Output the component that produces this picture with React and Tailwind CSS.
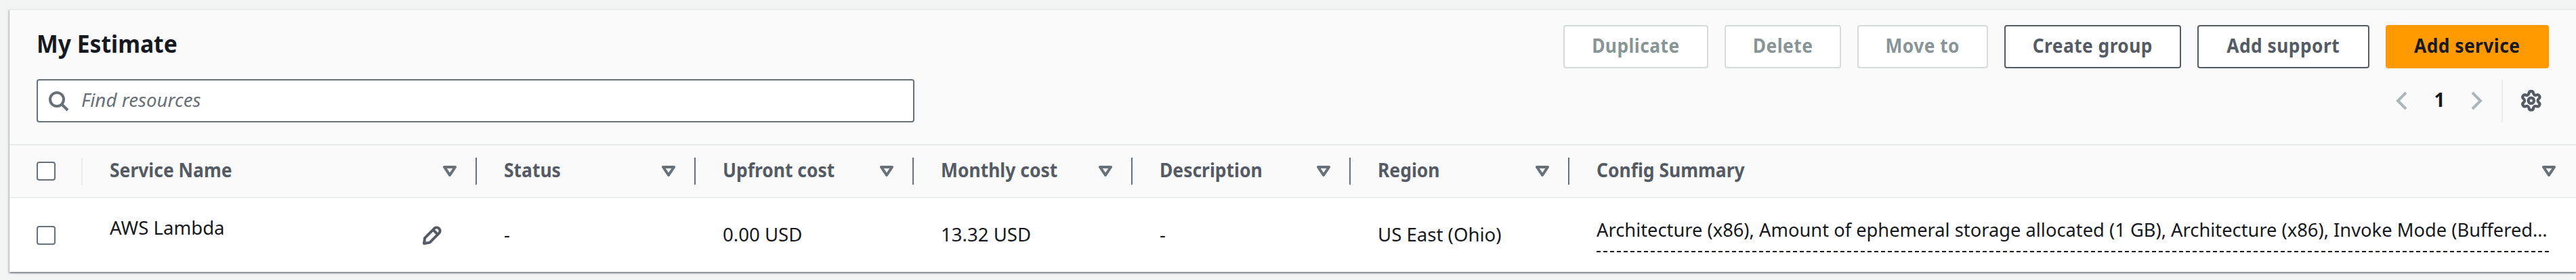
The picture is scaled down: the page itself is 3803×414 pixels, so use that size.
import React from "react";
import { Settings } from "lucide-react";

const columns = [
  { label: "Service Name", width: "w-[582px]" },
  { label: "Status", width: "w-[323px]" },
  { label: "Upfront cost", width: "w-[322px]" },
  { label: "Monthly cost", width: "w-[323px]" },
  { label: "Description", width: "w-[322px]" },
  { label: "Region", width: "w-[323px]" },
  { label: "Config Summary", width: "flex-1", last: true },
];

const actions = [
  { label: "Duplicate", width: "w-[214px]", tone: "border-[#d5dbdb] bg-white text-[#879596]" },
  { label: "Delete", width: "w-[172px]", tone: "border-[#d5dbdb] bg-white text-[#879596]" },
  { label: "Move to", width: "w-[193px]", tone: "border-[#d5dbdb] bg-white text-[#879596]" },
  { label: "Create group", width: "w-[261px]", tone: "border-[#545b64] bg-white text-[#545b64]" },
  { label: "Add support", width: "w-[254px]", tone: "border-[#545b64] bg-white text-[#545b64]" },
  { label: "Add service", width: "w-[241px]", tone: "border-[#ff9900] bg-[#ff9900] text-[#16191f]" },
];

function Icon({ className = "", children }) {
  return (
    <svg viewBox="0 0 16 16" className={`size-8 shrink-0 ${className}`} fill="none" stroke="currentColor" strokeWidth="2">
      {children}
    </svg>
  );
}

function SortIcon() {
  return (
    <Icon className="text-[#687078]">
      <path d="M4 5h8l-4 6-4-6z" strokeLinejoin="round" />
    </Icon>
  );
}

function EditIcon() {
  return (
    <svg viewBox="0 0 32 32" className="size-8 shrink-0 text-[#545b64]" fill="none" stroke="currentColor" strokeWidth="4" strokeLinejoin="round">
      <path d="M4 28l1.2-8.2L19.6 5.4a5 5 0 0 1 7 7L12.4 26.6z" />
      <path d="M17.3 7.7l7 7" />
    </svg>
  );
}

function Checkbox() {
  return <span className="block size-7 shrink-0 rounded-[4px] border-2 border-[#687078] bg-white" />;
}

function Cell({ width, children }) {
  return (
    <div className={`${width} flex h-full shrink-0 items-center pb-1 pl-10`}>
      <span className="origin-left scale-x-[0.985] whitespace-nowrap">{children}</span>
    </div>
  );
}

export default function App() {
  return (
    <div className="h-[414px] w-full overflow-hidden bg-[#f2f3f3] pt-[13px] pl-[14px] font-['Noto_Sans','Open_Sans',sans-serif] text-[28px] leading-[44px] text-[#16191f]">
      <section className="h-[389px] border-t-2 border-[#eaeded] bg-white shadow-[0_2px_2px_0_rgba(0,28,36,0.3),2px_2px_2px_0_rgba(0,28,36,0.15),-2px_2px_2px_0_rgba(0,28,36,0.15)]">
        <header className="h-[200px] border-b-2 border-[#eaeded] bg-[#fafafa] pt-[22px] pr-10 pl-10">
          <div className="flex h-16 items-center justify-between">
            <h1 className="origin-left scale-x-[0.935] pb-2 text-[36px] leading-[44px] font-bold">My Estimate</h1>
            <div className="flex gap-6">
              {actions.map((a) => (
                <button key={a.label} className={`${a.width} ${a.tone} flex h-16 items-center justify-center rounded-[4px] border-2 pb-1 font-bold whitespace-nowrap`}>
                  <span className="scale-x-[0.94] tracking-[0.5px]">{a.label}</span>
                </button>
              ))}
            </div>
          </div>

          <div className="mt-4 flex h-16 items-center justify-between">
            <div className="flex h-16 w-[1296px] items-center rounded-[4px] border-2 border-[#687078] bg-white pl-[14px] text-[#687078]">
              <Icon>
                <circle cx="7" cy="7" r="5" />
                <path d="M15 15l-4.5-4.5" />
              </Icon>
              <span className="ml-[18px] origin-left scale-x-[0.99] pb-1 italic">Find resources</span>
            </div>
            <div className="flex h-16 items-center">
              <Icon className="text-[#aab7b8]">
                <path d="M11 2L5 8l6 6" />
              </Icon>
              <span className="w-[78px] pb-1 text-center font-bold">1</span>
              <Icon className="text-[#aab7b8]">
                <path d="M5 2l6 6-6 6" />
              </Icon>
              <span className="ml-[21px] h-16 w-[2px] bg-[#eaeded]" />
              <Settings size={33.6} strokeWidth={3} className="mr-[9px] ml-[25px] text-[#545b64]" />
            </div>
          </div>
        </header>

        <div className="flex h-[78px] items-center border-b-2 border-[#eaeded] bg-[#fafafa] font-bold text-[#545b64]">
          <div className="flex w-[108px] items-center justify-between pl-10">
            <Checkbox />
            <span className="h-10 w-[2px] bg-[#eaeded]" />
          </div>
          {columns.map((c) => (
            <div key={c.label} className={`${c.width} flex h-10 items-center justify-between pl-10`}>
              <span className="origin-left scale-x-[0.945] pb-1 whitespace-nowrap">{c.label}</span>
              <div className="flex items-center">
                <SortIcon />
                <span className={c.last ? "w-6" : "ml-[22px] h-10 w-[2px] bg-[#687078]"} />
              </div>
            </div>
          ))}
        </div>

        <div className="flex h-[110px] items-center">
          <div className="w-[108px] shrink-0 pl-10">
            <Checkbox />
          </div>
          <div className="flex w-[582px] shrink-0 items-center justify-between pr-[50px] pl-10">
            <span className="origin-left scale-x-[0.985] pb-6 whitespace-nowrap">AWS Lambda</span>
            <EditIcon />
          </div>
          <Cell width="w-[323px]">-</Cell>
          <Cell width="w-[322px]">0.00 USD</Cell>
          <Cell width="w-[323px]">13.32 USD</Cell>
          <Cell width="w-[322px]">-</Cell>
          <Cell width="w-[323px]">US East (Ohio)</Cell>
          <div className="min-w-0 flex-1 pr-10 pb-[6px] pl-10">
            <div className="h-14 border-b-2 border-dashed border-[#16191f]">
              <div className="w-[1430px] origin-left scale-x-[0.975] whitespace-nowrap">
                Architecture (x86), Amount of ephemeral storage allocated (1 GB), Architecture (x86), Invoke Mode (Buffered…
              </div>
            </div>
          </div>
        </div>
      </section>
    </div>
  );
}
